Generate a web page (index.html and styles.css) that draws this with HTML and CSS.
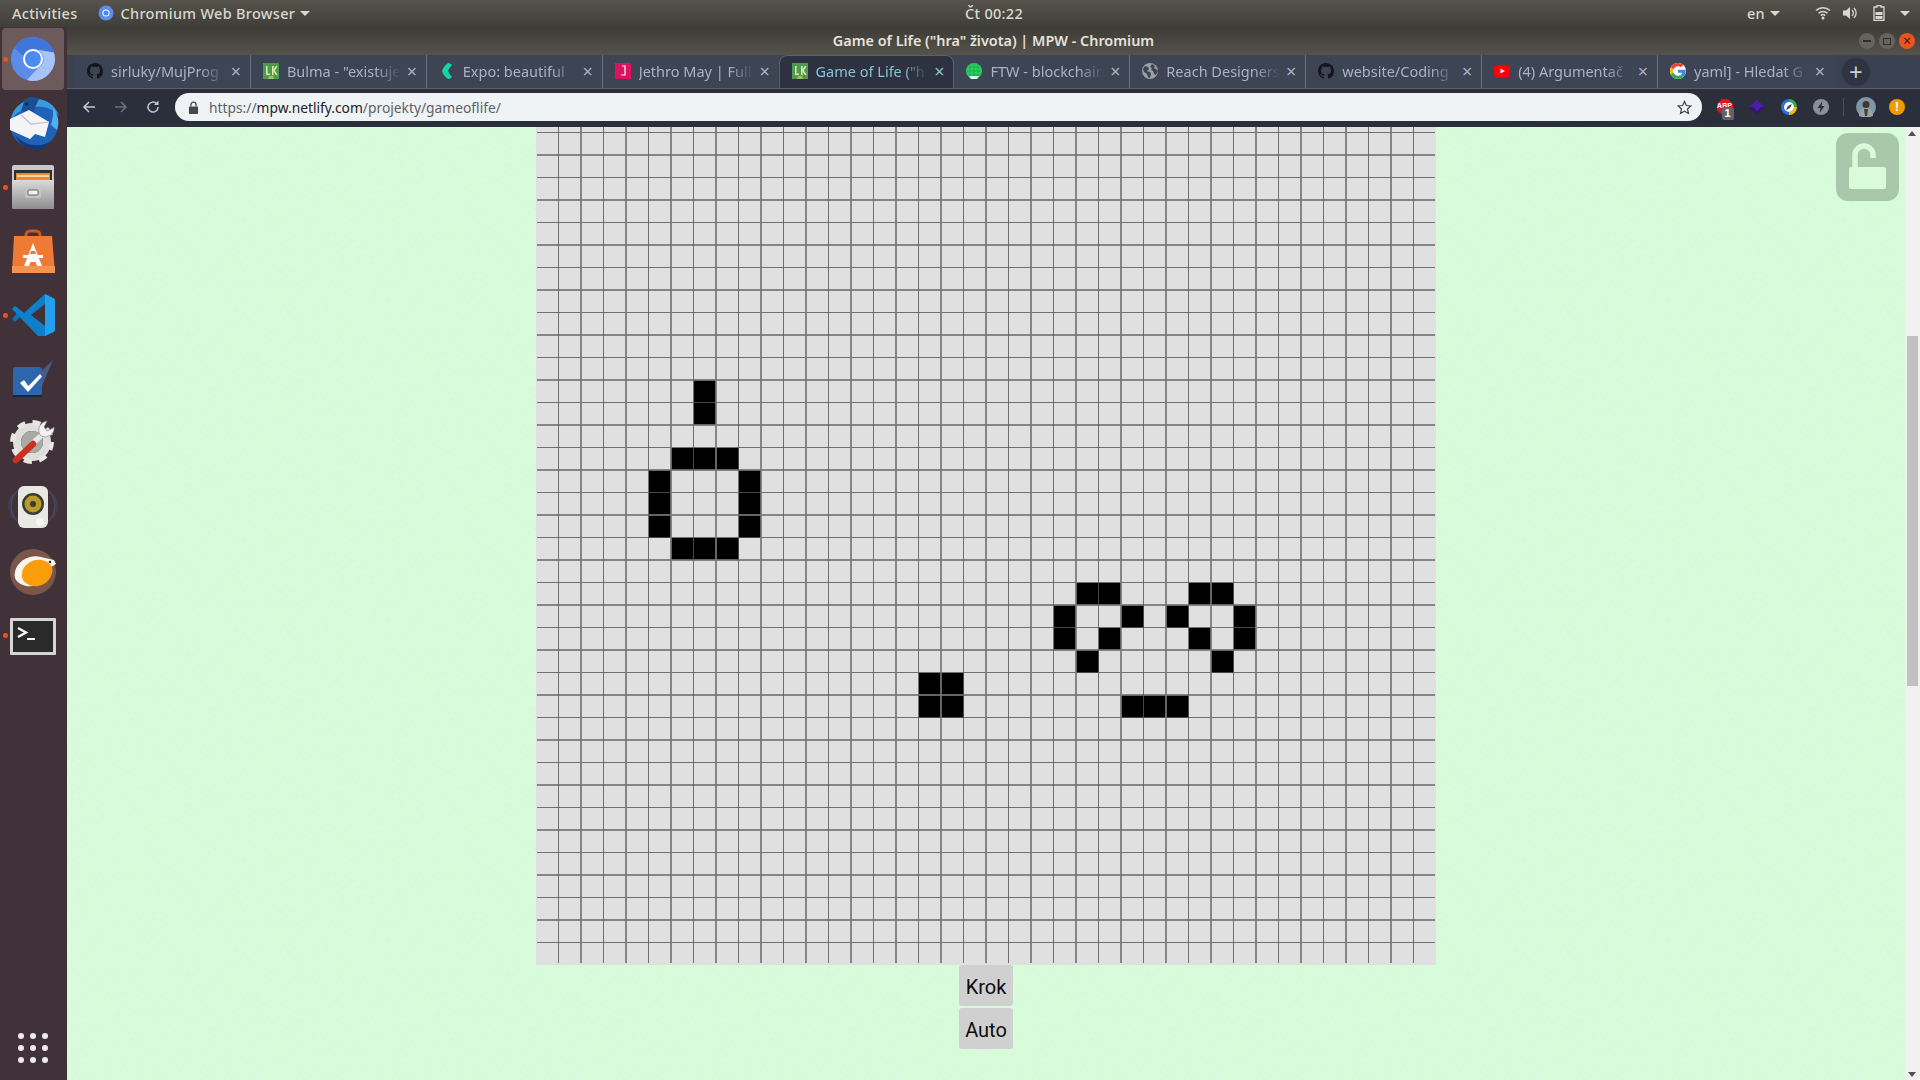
FILE: index.html
```html
<!DOCTYPE html>
<html lang="cs">
<head>
<meta charset="utf-8">
<title>Game of Life ("hra" života) | MPW - Chromium</title>
<link rel="stylesheet" href="styles.css">
</head>
<body>
<svg class="defs" width="0" height="0" aria-hidden="true">
  <symbol id="gh" viewBox="0 0 16 16"><path fill="#14161b" d="M8 0C3.58 0 0 3.58 0 8c0 3.54 2.29 6.53 5.47 7.59.4.07.55-.17.55-.38 0-.19-.01-.82-.01-1.49-2.01.37-2.53-.49-2.69-.94-.09-.23-.48-.94-.82-1.13-.28-.15-.68-.52-.01-.53.63-.01 1.08.58 1.23.82.72 1.21 1.87.87 2.33.66.07-.52.28-.87.51-1.07-1.78-.2-3.64-.89-3.64-3.95 0-.87.31-1.59.82-2.15-.08-.2-.36-1.02.08-2.12 0 0 .67-.21 2.2.82.64-.18 1.32-.27 2-.27.68 0 1.36.09 2 .27 1.53-1.04 2.2-.82 2.2-.82.44 1.1.16 1.92.08 2.12.51.56.82 1.27.82 2.15 0 3.07-1.87 3.75-3.65 3.95.29.25.54.73.54 1.48 0 1.07-.01 1.93-.01 2.2 0 .21.15.46.55.38A8.013 8.013 0 0016 8c0-4.42-3.58-8-8-8z"/></symbol>
  <symbol id="lk" viewBox="0 0 16 16"><rect width="16" height="16" fill="#4f9a52"/><path d="M3 3v9h4V10.600H4.600V3zM9 3v9h1.600V8.500L13 12h1.800l-2.900-4.300L14.500 3h-1.800l-2.100 3.600V3z" fill="#d8e8a0"/><path d="M6 13h4l1 3H5z" fill="#a3c24a"/></symbol>
  <symbol id="globe" viewBox="0 0 16 16"><circle cx="8" cy="8" r="8" fill="#9aa0a6"/><path d="M3 3l3 1 1 2-2 2 3 1 1 2-1 4-2-1-1-3-3-2-1-3zM10 1l3 2-1 2 2 1 2 2-2 4-2-1-1-3-2-1 1-2-2-1z" fill="#3d4452"/></symbol>
</svg>

<header class="topbar">
  <div class="top-left">
    <span>Activities</span>
    <span class="app-menu">
      <svg class="app-icon" viewBox="0 0 16 16"><circle cx="8" cy="8" r="7.500" fill="#5c8dea"/><circle cx="8" cy="8" r="3.600" fill="#fff"/><circle cx="8" cy="8" r="2.600" fill="#4a8af0"/></svg>
      Chromium Web Browser<i class="caret"></i>
    </span>
  </div>
  <div class="clock">Čt 00:22</div>
  <div class="top-right">
    <span class="lang">en<i class="caret"></i></span>
    <svg class="tray wifi" viewBox="0 0 16 16"><g fill="none" stroke="#d8d8d0" stroke-width="1.500"><path d="M1 5.500a10 10 0 0 1 14 0"/><path d="M3.500 8.200a6.500 6.500 0 0 1 9 0"/><path d="M5.800 10.600a3.200 3.200 0 0 1 4.400 0"/></g><circle cx="8" cy="13" r="1.500" fill="#d8d8d0"/></svg>
    <svg class="tray vol" viewBox="0 0 16 16"><path d="M1 5.500h3L8 2v12L4 10.500H1z" fill="#d8d8d0"/><path d="M10 5a4 4 0 0 1 0 6M12 3a7 7 0 0 1 0 10" fill="none" stroke="#d8d8d0" stroke-width="1.300"/></svg>
    <svg class="tray bat" viewBox="0 0 12 16"><path d="M4 .5h4V2h3v13.500H1V2h3z" fill="none" stroke="#d8d8d0" stroke-width="1.300"/><rect x="2.500" y="7" width="7" height="3" fill="#d8d8d0"/><rect x="2.500" y="11" width="7" height="3" fill="#d8d8d0"/></svg>
    <i class="caret sys-caret"></i>
  </div>
</header>

<div class="desktop">
  <nav class="dock">
    <div class="slot active"><i class="run-dot"></i>
      <svg class="ico" viewBox="0 0 60 60"><circle cx="30" cy="30" r="22" fill="#5a8dea"/><path d="M11 19A22 22 0 0 1 51 23.500L30 20A10 10 0 0 0 20.500 27z" fill="#3f76dc"/><path d="M30 20L51 23.500A22 22 0 0 1 24 51L35 39A10 10 0 0 0 30 20z" fill="#a8c3f8"/><circle cx="30" cy="30" r="10" fill="#fff"/><circle cx="30" cy="30" r="8" fill="#4a8cf2"/></svg>
    </div>
    <div class="slot">
      <svg class="ico" viewBox="0 0 60 60"><circle cx="31" cy="31" r="24" fill="#1f63b8"/><path d="M8 30C8 15 20 6 33 6c11 0 20 7 23 17-6-7-14-10-23-9C20 15 10 20 8 30z" fill="#3a9ae0"/><path d="M22 6c6-3 12-2 14 0l-6 13-12-1z" fill="#1a4d94"/><circle cx="23.500" cy="11" r="1.500" fill="#0c2140"/><path d="M7 26l19-9 20 12-4 15-10-3-5 5-20-9z" fill="#f4f4f6"/><path d="M18 22l10 9 18-2" fill="none" stroke="#bcc3cc" stroke-width="1.200"/><path d="M12 42c8 10 24 14 36 6l-9 8c-10 2-22-2-27-14z" fill="#123a78"/><path d="M50 15c5 6 7 14 4 22l-6-5 2-9z" fill="#4db0f0"/></svg>
    </div>
    <div class="slot"><i class="run-dot"></i>
      <svg class="ico" viewBox="0 0 60 60"><defs><linearGradient id="cab" x1="0" y1="0" x2="0" y2="1"><stop offset="0" stop-color="#dadada"/><stop offset="1" stop-color="#8e8e8e"/></linearGradient></defs><rect x="9" y="8" width="42" height="44" rx="2" fill="#c8c8c8"/><rect x="11" y="13" width="38" height="10" fill="#332f2b"/><rect x="13" y="16" width="34" height="7" fill="#e88a3c"/><rect x="14" y="18" width="32" height="2" fill="#f6d6a8"/><path d="M9 23h42v27a2 2 0 0 1-2 2H11a2 2 0 0 1-2-2z" fill="url(#cab)"/><rect x="22" y="30" width="16" height="11" rx="1.500" fill="#c4c4c4"/><rect x="25" y="33" width="10" height="5" rx="1" fill="#f4f4f4" stroke="#444" stroke-width=".8"/></svg>
    </div>
    <div class="slot">
      <svg class="ico" viewBox="0 0 60 60"><path d="M23 20v-6a4 4 0 0 1 4-4h6a4 4 0 0 1 4 4v6" fill="none" stroke="#c85a22" stroke-width="3"/><path d="M11 15h38l3 37H9z" fill="#ef7a35"/><rect x="9" y="45" width="43" height="7" fill="#f29350"/><path d="M30 22l-9 23h5l1.500-4h5l1.500 4h5z" fill="#fff"/><rect x="20" y="34" width="20" height="3" fill="#fff"/><path d="M28 30h4l1.200 3h-6.400z" fill="#ef7a35"/></svg>
    </div>
    <div class="slot"><i class="run-dot"></i>
      <svg class="ico" viewBox="0 0 60 60"><path d="M9 24l3-3 9 7-9 9-3-3 5-6z" fill="#0a70b8"/><path d="M42 9L21 28 12 21l-3 3 26 27 7 0 9-4V14z" fill="#0d7fcb"/><path d="M42 9l10 5v32l-10 5z" fill="#22a0ee"/><path d="M42 19L28 30l14 11z" fill="#41323a"/></svg>
    </div>
    <div class="slot">
      <svg class="ico" viewBox="0 0 60 60"><path d="M22 38L50 11 38 39 27 46z" fill="#4a7fc4" opacity=".55"/><rect x="10" y="18" width="29" height="29" rx="3" fill="#2d66ad"/><rect x="10" y="46" width="29" height="2" fill="#17263d"/><path d="M17 34l4-3 4.500 6L37 25l2 2.500L25 43z" fill="#fff"/></svg>
    </div>
    <div class="slot">
      <svg class="ico" viewBox="0 0 60 60"><circle cx="29" cy="29" r="15" fill="none" stroke="#dedeDb" stroke-width="8"/><circle cx="29" cy="29" r="19.500" fill="none" stroke="#e6e6e3" stroke-width="5" stroke-dasharray="8 7.300"/><circle cx="29" cy="29" r="11" fill="#a9a9a6"/><path d="M29 31L42 19" stroke="#e8e8e6" stroke-width="5.500"/><path d="M13 47L30 31" stroke="#cb2f20" stroke-width="6.500" stroke-linecap="round"/><path d="M38 23a9 9 0 0 1 3-14l3-1-3 6 3 4 6-3 1-1a9 9 0 0 1-13 9z" fill="#f2f2f2" stroke="#8a8a8a" stroke-width=".7"/></svg>
    </div>
    <div class="slot">
      <svg class="ico" viewBox="0 0 60 60"><g fill="none" stroke="#47557a" stroke-width="1.500" opacity=".7"><path d="M14 14a22 22 0 0 0 0 30"/><path d="M46 14a22 22 0 0 1 0 30"/><path d="M10 17a20 20 0 0 0 0 24" opacity=".5"/><path d="M50 17a20 20 0 0 1 0 24" opacity=".5"/></g><rect x="15" y="9" width="30" height="42" rx="6" fill="#e8e8e4"/><circle cx="30" cy="27" r="11" fill="#3e3a33"/><circle cx="30" cy="27" r="8.500" fill="#b89c28"/><circle cx="30" cy="27" r="3" fill="#3e3a33"/><circle cx="37" cy="45" r="4" fill="#f6f6f4"/></svg>
    </div>
    <div class="slot">
      <svg class="ico" viewBox="0 0 60 60"><circle cx="30" cy="31" r="23" fill="#7a5748"/><path d="M12 31c2-11 15-18 26-15l13 3 2 4-8 5c-2 12-12 19-22 17-8-2-13-7-11-14z" fill="#f8f5ee"/><path d="M19 33c0-9 11-16 20-14 8 2 12 7 10 13-2 9-10 14-19 13-7-1-12-6-11-12z" fill="#fb9d0a"/><circle cx="47" cy="21" r="1.200" fill="#222"/></svg>
    </div>
    <div class="slot"><i class="run-dot"></i>
      <svg class="ico" viewBox="0 0 60 60"><rect x="7" y="13" width="46" height="37" rx="1" fill="#d5d5d3"/><rect x="10" y="16" width="40" height="31" fill="#2a2a2a"/><path d="M15 23l8 4.500-8 4.500" fill="none" stroke="#f4f4f4" stroke-width="2.400"/><rect x="24" y="33" width="8" height="2" fill="#f4f4f4"/></svg>
    </div>
    <div class="slot apps">
      <span class="apps-grid"><i></i><i></i><i></i><i></i><i></i><i></i><i></i><i></i><i></i></span>
    </div>
  </nav>

  <div class="window">
    <div class="titlebar">
      <span class="win-title">Game of Life ("hra" života) | MPW - Chromium</span>
      <div class="win-btns">
        <span class="wb"><i class="wb-min"></i></span>
        <span class="wb"><i class="wb-max"></i></span>
        <span class="wb close">×</span>
      </div>
    </div>

    <div class="tabstrip">
      <div class="tab"><svg class="fav"><use href="#gh"/></svg><span class="tab-title">sirluky/MujProg</span><span class="tab-x">×</span></div>
      <div class="tab"><svg class="fav"><use href="#lk"/></svg><span class="tab-title">Bulma - "existuje</span><span class="tab-x">×</span></div>
      <div class="tab"><svg class="fav" viewBox="0 0 16 16"><path d="M9 0C6 2 4 5 3 8c1 3 3 6 6 8 2 0 3-1 4-2-2-2-3-4-4-6 1-2 2-4 4-6-1-1-2-2-4-2z" fill="#19d3a2"/></svg><span class="tab-title">Expo: beautiful</span><span class="tab-x">×</span></div>
      <div class="tab"><svg class="fav" viewBox="0 0 16 16"><rect width="16" height="16" fill="#e0115f"/><path d="M7 3h3v9H6" fill="none" stroke="#fff" stroke-width="1.200"/></svg><span class="tab-title">Jethro May | Full</span><span class="tab-x">×</span></div>
      <div class="tab on"><svg class="fav"><use href="#lk"/></svg><span class="tab-title">Game of Life ("h</span><span class="tab-x">×</span></div>
      <div class="tab"><svg class="fav" viewBox="0 0 16 16"><circle cx="8" cy="8" r="8" fill="#2ecc5f"/><path d="M3 4h10M1 8h14M3 12h10M8 0v16M4 1v14M12 1v14" stroke="#14a045" stroke-width=".6"/><path d="M3 13h10l-2 3H5z" fill="#dfe"/></svg><span class="tab-title">FTW - blockchain</span><span class="tab-x">×</span></div>
      <div class="tab"><svg class="fav"><use href="#globe"/></svg><span class="tab-title">Reach Designers</span><span class="tab-x">×</span></div>
      <div class="tab"><svg class="fav"><use href="#gh"/></svg><span class="tab-title">website/Coding</span><span class="tab-x">×</span></div>
      <div class="tab"><svg class="fav" viewBox="0 0 16 16"><rect y="2" width="16" height="12" rx="3" fill="#f00"/><path d="M6.500 5.500v5L11 8z" fill="#fff"/></svg><span class="tab-title">(4) Argumentač</span><span class="tab-x">×</span></div>
      <div class="tab"><svg class="fav" viewBox="0 0 48 48"><circle cx="24" cy="24" r="24" fill="#fff"/><path fill="#EA4335" d="M24 9.500c3.540 0 6.710 1.220 9.210 3.600l6.850-6.850C35.900 2.380 30.470 0 24 0 14.620 0 6.510 5.380 2.560 13.220l7.980 6.190C12.430 13.720 17.740 9.500 24 9.500z"/><path fill="#4285F4" d="M46.980 24.550c0-1.570-.15-3.090-.38-4.550H24v9.020h12.940c-.58 2.960-2.260 5.480-4.780 7.180l7.730 6c4.510-4.180 7.090-10.360 7.090-17.650z"/><path fill="#FBBC05" d="M10.530 28.590c-.48-1.450-.76-2.990-.76-4.590s.27-3.140.76-4.590l-7.980-6.190C.92 16.460 0 20.120 0 24c0 3.880.92 7.540 2.560 10.780l7.970-6.190z"/><path fill="#34A853" d="M24 48c6.480 0 11.930-2.130 15.890-5.810l-7.730-6c-2.150 1.450-4.920 2.300-8.160 2.300-6.260 0-11.570-4.220-13.470-9.910l-7.980 6.190C6.510 42.620 14.620 48 24 48z"/></svg><span class="tab-title">yaml] - Hledat G</span><span class="tab-x">×</span></div>
      <span class="newtab">+</span>
    </div>

    <div class="toolbar">
      <svg class="nav" viewBox="0 0 16 16"><path d="M14 8H3M8 3L3 8l5 5" fill="none" stroke="#c4c9d2" stroke-width="1.500"/></svg>
      <svg class="nav" viewBox="0 0 16 16"><path d="M2 8h11M8 3l5 5-5 5" fill="none" stroke="#6c7280" stroke-width="1.500"/></svg>
      <svg class="nav" viewBox="0 0 16 16"><path d="M13 8a5 5 0 1 1-1.500-3.500" fill="none" stroke="#c4c9d2" stroke-width="1.500"/><path d="M13.500 1.500V6H9z" fill="#c4c9d2"/></svg>
      <div class="omnibox">
        <svg class="padlock" viewBox="0 0 12 14"><rect x="1" y="6" width="10" height="8" rx="1" fill="#45484e"/><path d="M3.200 6V4a2.800 2.800 0 0 1 5.600 0v2" fill="none" stroke="#45484e" stroke-width="1.400"/></svg>
        <span class="url"><span class="dim">https://</span>mpw.netlify.com<span class="dim">/projekty/gameoflife/</span></span>
        <svg class="star" viewBox="0 0 16 16"><path d="M8 1.500l2 4.400 4.800.5-3.600 3.200 1 4.700L8 11.900l-4.200 2.400 1-4.700L1.200 6.400 6 5.900z" fill="none" stroke="#3f434a" stroke-width="1.300"/></svg>
      </div>
      <div class="exts">
        <span class="ext abp"><svg viewBox="0 0 16 16"><path d="M5 0h6l5 5v6l-5 5H5l-5-5V5z" fill="#e0141e"/></svg><b class="abp-t">ABP</b><b class="abp-n">1</b></span>
        <svg class="ext" viewBox="0 0 16 16"><path d="M8 1l7 6-7 6-7-6z" fill="#4b1fa8"/><path d="M1 9l7 6 7-6-2-1.500L8 12 3 7.500z" fill="#33137a"/></svg>
        <svg class="ext" viewBox="0 0 16 16"><path d="M8 0a8 8 0 0 1 8 8h-3a5 5 0 0 0-5-5z" fill="#34a853"/><path d="M16 8a8 8 0 0 1-8 8v-3a5 5 0 0 0 5-5z" fill="#fbbc05"/><path d="M8 16A8 8 0 0 1 8 0v3a5 5 0 0 0 0 10z" fill="#2a6fe0"/><circle cx="8" cy="8" r="5" fill="#fff"/><path d="M11 5L9 9 7 7z" fill="#2a3550"/><path d="M5 11l2-4 2 2z" fill="#2a3550"/></svg>
        <svg class="ext" viewBox="0 0 16 16"><circle cx="8" cy="8" r="8" fill="#8a8f98"/><path d="M9.500 2L4.500 9h3L6.500 14l5-7h-3z" fill="#2b2f3b"/></svg>
        <i class="tool-sep"></i>
        <svg class="avatar" viewBox="0 0 20 20"><circle cx="10" cy="10" r="10" fill="#7d96a8"/><circle cx="10" cy="7.500" r="3.500" fill="#4a3428"/><path d="M3 19c0-6 3-8 7-8s7 2 7 8l-3 1H6z" fill="#9aa59c"/><path d="M8 12h4l-1 7H9z" fill="#38444f"/></svg>
        <span class="alert">!</span>
      </div>
    </div>

    <main class="viewport">
      <div class="page">
        <div class="life">
          <i style="grid-area:13/8"></i><i style="grid-area:14/8"></i>
          <i style="grid-area:16/7"></i><i style="grid-area:16/8"></i><i style="grid-area:16/9"></i>
          <i style="grid-area:17/6"></i><i style="grid-area:17/10"></i>
          <i style="grid-area:18/6"></i><i style="grid-area:18/10"></i>
          <i style="grid-area:19/6"></i><i style="grid-area:19/10"></i>
          <i style="grid-area:20/7"></i><i style="grid-area:20/8"></i><i style="grid-area:20/9"></i>
          <i style="grid-area:22/25"></i><i style="grid-area:22/26"></i><i style="grid-area:22/30"></i><i style="grid-area:22/31"></i>
          <i style="grid-area:23/24"></i><i style="grid-area:23/27"></i><i style="grid-area:23/29"></i><i style="grid-area:23/32"></i>
          <i style="grid-area:24/24"></i><i style="grid-area:24/26"></i><i style="grid-area:24/30"></i><i style="grid-area:24/32"></i>
          <i style="grid-area:25/25"></i><i style="grid-area:25/31"></i>
          <i style="grid-area:27/27"></i><i style="grid-area:27/28"></i><i style="grid-area:27/29"></i>
          <i style="grid-area:26/18"></i><i style="grid-area:26/19"></i><i style="grid-area:27/18"></i><i style="grid-area:27/19"></i>
        </div>
        <button class="btn first">Krok</button>
        <button class="btn">Auto</button>
      </div>
      <div class="lock-badge">
        <svg viewBox="0 0 63 68" width="63" height="68"><path d="M19 36V22a9 9 0 0 1 18 0v3" fill="none" stroke="#d9fbd9" stroke-width="5.500"/><rect x="13" y="34" width="37" height="22" rx="2.500" fill="#d9fbd9"/></svg>
      </div>
      <div class="scrollbar">
        <i class="arrow up"></i>
        <i class="thumb"></i>
        <i class="arrow down"></i>
      </div>
    </main>
  </div>
</div>
</body>
</html>
```

FILE: styles.css
```css
* { box-sizing: border-box; }
html, body { margin: 0; height: 100%; }
body {
  width: 1920px;
  height: 1080px;
  overflow: hidden;
  display: flex;
  flex-direction: column;
  font-family: "Noto Sans", "Open Sans", sans-serif;
  background: #3c3b37;
}
i { display: block; font-style: normal; }
.defs { position: absolute; }

/* top bar */
.topbar {
  height: 27px;
  flex: none;
  display: grid;
  grid-template-columns: 953px auto 1fr;
  align-items: center;
  padding: 0 10px 1px 12px;
  background: linear-gradient(#56534b, #3f3e39);
  color: #d9d8d0;
  font-size: 14.500px;
  letter-spacing: .3px;
  font-weight: 500;
}
.top-left { display: flex; align-items: center; gap: 21px; }
.app-menu { display: flex; align-items: center; }
.app-icon { width: 16px; height: 16px; margin-right: 6px; }
.caret {
  display: inline-block;
  width: 0; height: 0;
  margin-left: 5px;
  border: 5px solid transparent;
  border-top-color: #d9d8d0;
  border-bottom-width: 0;
}
.clock { text-align: center; }
.top-right { display: flex; align-items: center; justify-content: flex-end; }
.lang { display: flex; align-items: center; margin-right: 35px; }
.tray { width: 16px; height: 16px; }
.vol { margin-left: 11px; }
.bat { margin-left: 13px; }
.sys-caret { margin-left: 13px; }

.desktop { flex: 1; display: flex; min-height: 0; }

/* dock */
.dock {
  width: 67px;
  flex: none;
  display: flex;
  flex-direction: column;
  gap: 2px;
  padding: 1px 3px 1px 2px;
  background: #41323a;
}
.slot {
  position: relative;
  height: 62px;
  flex: none;
  display: flex;
  align-items: center;
  justify-content: center;
  border-radius: 4px;
}
.slot.active { background: #6c5a5d; }
.run-dot {
  position: absolute;
  left: 1px;
  top: 28.500px;
  width: 5px;
  height: 5px;
  border-radius: 50%;
  background: #e9541f;
}
.ico { width: 60px; height: 60px; }
.apps { margin-top: auto; }
.apps-grid {
  display: grid;
  grid-template-columns: repeat(3, 6px);
  gap: 6px;
}
.apps-grid i { width: 6px; height: 6px; border-radius: 50%; background: #efecef; }

/* window */
.window { flex: 1; min-width: 0; display: flex; flex-direction: column; }
.titlebar {
  position: relative;
  height: 28px;
  flex: none;
  display: flex;
  align-items: center;
  justify-content: center;
  padding-bottom: 2px;
  background: linear-gradient(#3c3b36, #56534b);
}
.win-title { color: #e4e2dc; font-size: 14.400px; font-weight: 600; }
.win-btns { position: absolute; right: 5px; top: 6px; display: flex; gap: 4px; }
.wb {
  width: 16px; height: 16px;
  border-radius: 50%;
  background: #65635c;
  display: flex;
  align-items: center;
  justify-content: center;
}
.wb-min { width: 8px; height: 1.500px; background: #2f2e2a; }
.wb-max { width: 8px; height: 7px; border: 1px solid #2f2e2a; }
.wb.close { background: #e9541f; color: #3a1a0c; font-size: 14px; line-height: 1; }

/* tabs */
.tabstrip {
  height: 34px;
  flex: none;
  display: flex;
  padding-left: 8px;
  background: #3a4150;
  border-bottom: 1px solid #5a606c;
}
.tab {
  position: relative;
  width: 175.900px;
  height: 33px;
  flex: none;
  display: flex;
  align-items: center;
  padding: 0 7px 2px 12px;
  background: #3d4453;
  color: #a9b3c4;
  font-size: 14.500px;
  border-right: 1px solid #6a7080;
}
.tab.on {
  background: #2e3240;
  color: #86c3d6;
  border: 1px solid #5a606c;
  border-bottom: 0;
  border-radius: 8px 8px 0 0;
  z-index: 1;
}
.tab:nth-child(4), .tab:nth-child(10) { border-right: 0; }
.fav { width: 16px; height: 16px; flex: none; margin-right: 8px; }
.tab-title {
  flex: 1;
  min-width: 0;
  overflow: hidden;
  white-space: nowrap;
  -webkit-mask-image: linear-gradient(90deg, #000 78%, transparent 100%);
  mask-image: linear-gradient(90deg, #000 78%, transparent 100%);
}
.tab-x { width: 14px; margin-left: 4px; font-size: 18px; line-height: 1; text-align: center; }
.newtab {
  width: 28px; height: 28px;
  margin: 3px 0 0 8px;
  border-radius: 50%;
  background: #2e3442;
  color: #c9cfd9;
  font-size: 24px;
  line-height: 27px;
  text-align: center;
}

/* toolbar */
.toolbar {
  height: 38px;
  flex: none;
  display: flex;
  align-items: center;
  gap: 16px;
  padding: 0 0 2px 14px;
  background: #2b2f3b;
}
.nav { width: 16px; height: 16px; flex: none; }
.omnibox {
  width: 1527px;
  height: 28px;
  margin-left: -2px;
  flex: none;
  display: flex;
  align-items: center;
  padding: 0 10px 0 13px;
  border-radius: 14px;
  background: #eff3f5;
  color: #1f2125;
  font-size: 13.800px;
}
.padlock { width: 11px; height: 13px; flex: none; margin-right: 10px; }
.url { flex: 1; white-space: nowrap; }
.dim { color: #5d6168; }
.star { width: 15px; height: 15px; flex: none; }
.exts { display: flex; align-items: center; margin-left: -1.500px; }
.ext { position: relative; width: 16px; height: 16px; flex: none; margin-right: 16px; }
.ext svg { display: block; width: 16px; height: 16px; }
.abp-t {
  position: absolute; left: 0; top: 3px; width: 16px;
  color: #fff; font: 700 7px "Liberation Sans", sans-serif; text-align: center;
}
.abp-n {
  position: absolute; left: 5px; top: 8px;
  width: 12px; height: 13px;
  border-radius: 2px;
  background: #5f6368;
  color: #fff;
  font: 700 11px/13px "Liberation Sans", sans-serif;
  text-align: center;
}
.tool-sep { width: 1px; height: 18px; background: #4a4f5c; margin: 0 12px 0 -2px; }
.avatar { width: 20px; height: 20px; flex: none; }
.alert {
  width: 16px; height: 16px;
  margin-left: 13.500px;
  border-radius: 50%;
  background: #f29900;
  color: #fff;
  font: 700 13px/16px "Liberation Sans", sans-serif;
  text-align: center;
}

/* page */
.viewport {
  position: relative;
  flex: 1;
  min-height: 0;
  display: flex;
  overflow: hidden;
  background-color: #d6fcd7;
  background-image: url("data:image/svg+xml,%3Csvg xmlns='http://www.w3.org/2000/svg' width='320' height='320'%3E%3Cfilter id='n'%3E%3CfeTurbulence type='fractalNoise' baseFrequency='.25' numOctaves='3' stitchTiles='stitch'/%3E%3CfeColorMatrix values='0 0 0 0 .72 0 0 0 0 .95 0 0 0 0 .74 0 0 0 3 -1.200'/%3E%3C/filter%3E%3Crect width='320' height='320' filter='url(%23n)'/%3E%3C/svg%3E");
}
.page {
  flex: 1;
  min-width: 0;
  display: flex;
  flex-direction: column;
  align-items: center;
}
.life {
  position: relative;
  flex: none;
  width: 900px;
  height: 838px;
  display: grid;
  grid-template-columns: repeat(40, 22.500px);
  grid-template-rows: 5.500px repeat(37, 22.500px);
  background: #e0e0e0;
}
.life i { background: #000; }
.life::after {
  content: "";
  position: absolute;
  left: 1px;
  top: 0;
  width: 898px;
  height: 836px;
  background-image:
    linear-gradient(90deg, transparent 21px, rgba(86,86,86,.81) 21px 22px, transparent 22px 43px, rgba(118,118,118,.85) 43px 45px),
    linear-gradient(transparent 5px, rgba(86,86,86,.81) 5px 6px, transparent 6px 27px, rgba(118,118,118,.85) 27px 29px, transparent 29px);
  background-size: 45px 45px;
}
.btn {
  width: 54px;
  height: 41px;
  padding: 2px 0 0;
  border: 0;
  border-radius: 3px;
  background: #d0d0d0;
  color: #0c0c0c;
  font-family: Roboto, sans-serif;
  font-size: 20px;
}
.btn.first { margin-bottom: 2px; }
.lock-badge {
  position: absolute;
  right: 21px;
  top: 6px;
  width: 63px;
  height: 68px;
  border-radius: 12px;
  background: #a9c7aa;
}
.lock-badge svg { display: block; }
.scrollbar {
  position: relative;
  width: 15px;
  flex: none;
  background: #f1f1f1;
}
.thumb {
  position: absolute;
  left: 2px;
  top: 209px;
  width: 11px;
  height: 350px;
  background: #c1c1c1;
}
.arrow {
  position: absolute;
  left: 3px;
  width: 0; height: 0;
  border: 4px solid transparent;
}
.arrow.up { top: 4px; border-top-width: 0; border-bottom: 5px solid #505050; }
.arrow.down { bottom: 3px; border-bottom-width: 0; border-top: 5px solid #505050; }
```
